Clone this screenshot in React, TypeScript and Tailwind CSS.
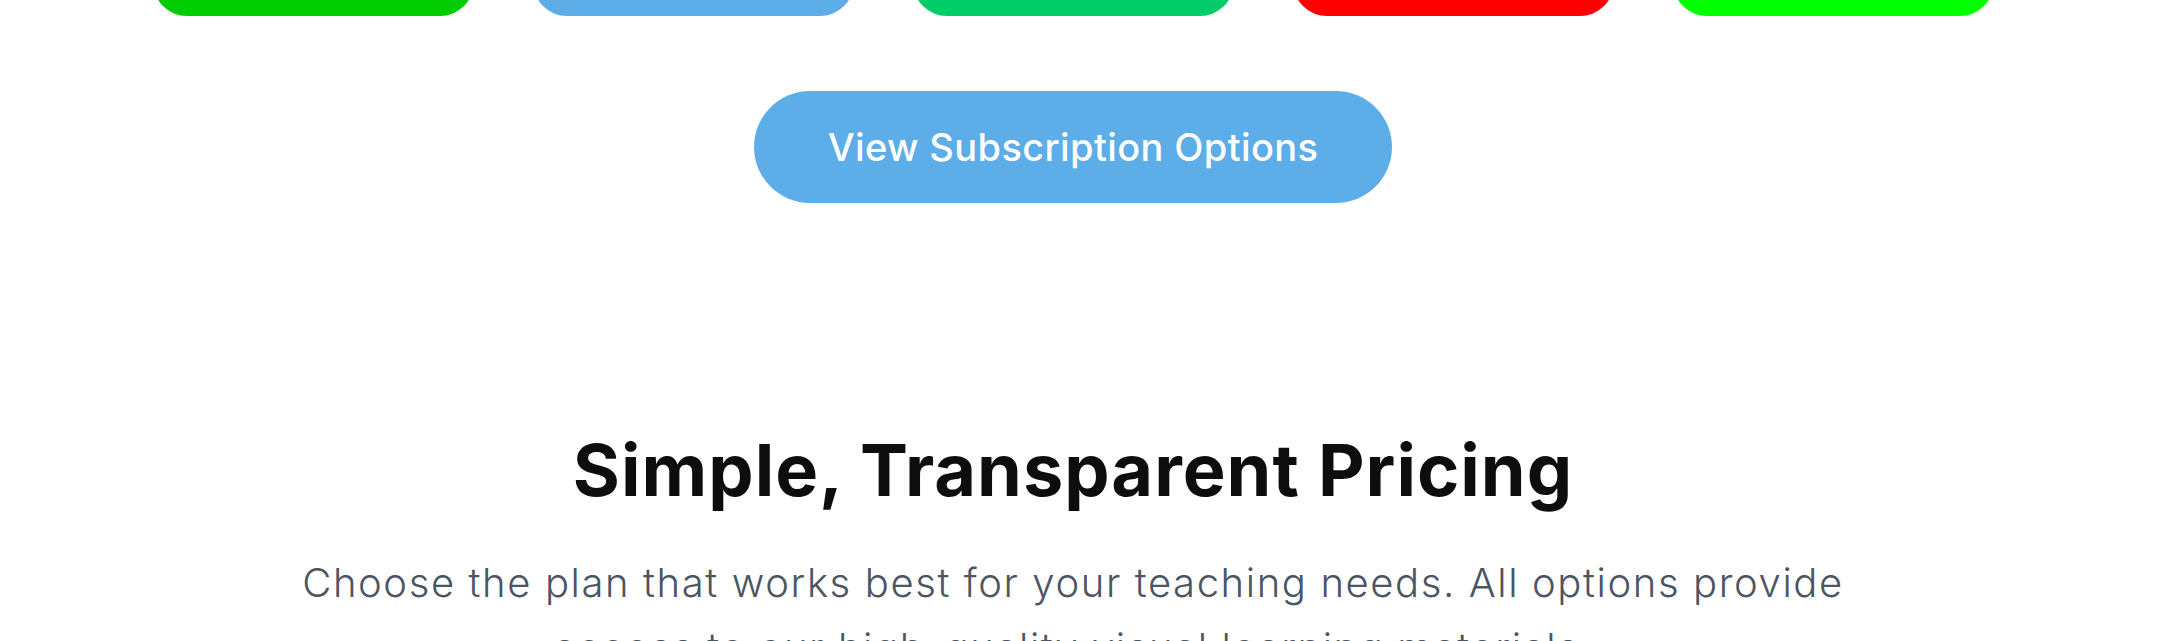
const pills = ["bg-[#00cc00]", "bg-[#5dade9]", "bg-[#00cc6a]", "bg-[#ff0000]", "bg-[#00ff00]"]

function PillRow() {
    return (
        <div className="mx-auto -mt-[52px] grid w-[1841px] grid-cols-5 gap-x-[59px]">
            {pills.map((c, i) => (
                <div key={i} className={`h-[68px] rounded-full ${c}`} />
            ))}
        </div>
    )
}

export default function App() {
    return (
        <div className="min-h-[641px] overflow-hidden bg-white pr-6 font-['Inter',sans-serif]">
            <PillRow />

            <div className="mt-[75px] flex justify-center">
                <button className="h-[112px] w-[638px] rounded-full bg-[#5dade9] text-[38px] font-medium tracking-[0.01em] text-white">
                    View Subscription Options
                </button>
            </div>

            <section className="mt-[231px] flex flex-col items-center">
                <h2 className="text-[72px] font-bold leading-none tracking-[0.014em] text-[#0d0d0d]">
                    Simple, Transparent Pricing
                </h2>
                <p className="mt-[44px] max-w-[1600px] text-center text-[40px] font-light leading-relaxed tracking-[0.04em] text-[#4b5563]">
                    Choose the plan that works best for your teaching needs. All options provide access to our high-quality visual learning materials.
                </p>
            </section>
        </div>
    )
}
